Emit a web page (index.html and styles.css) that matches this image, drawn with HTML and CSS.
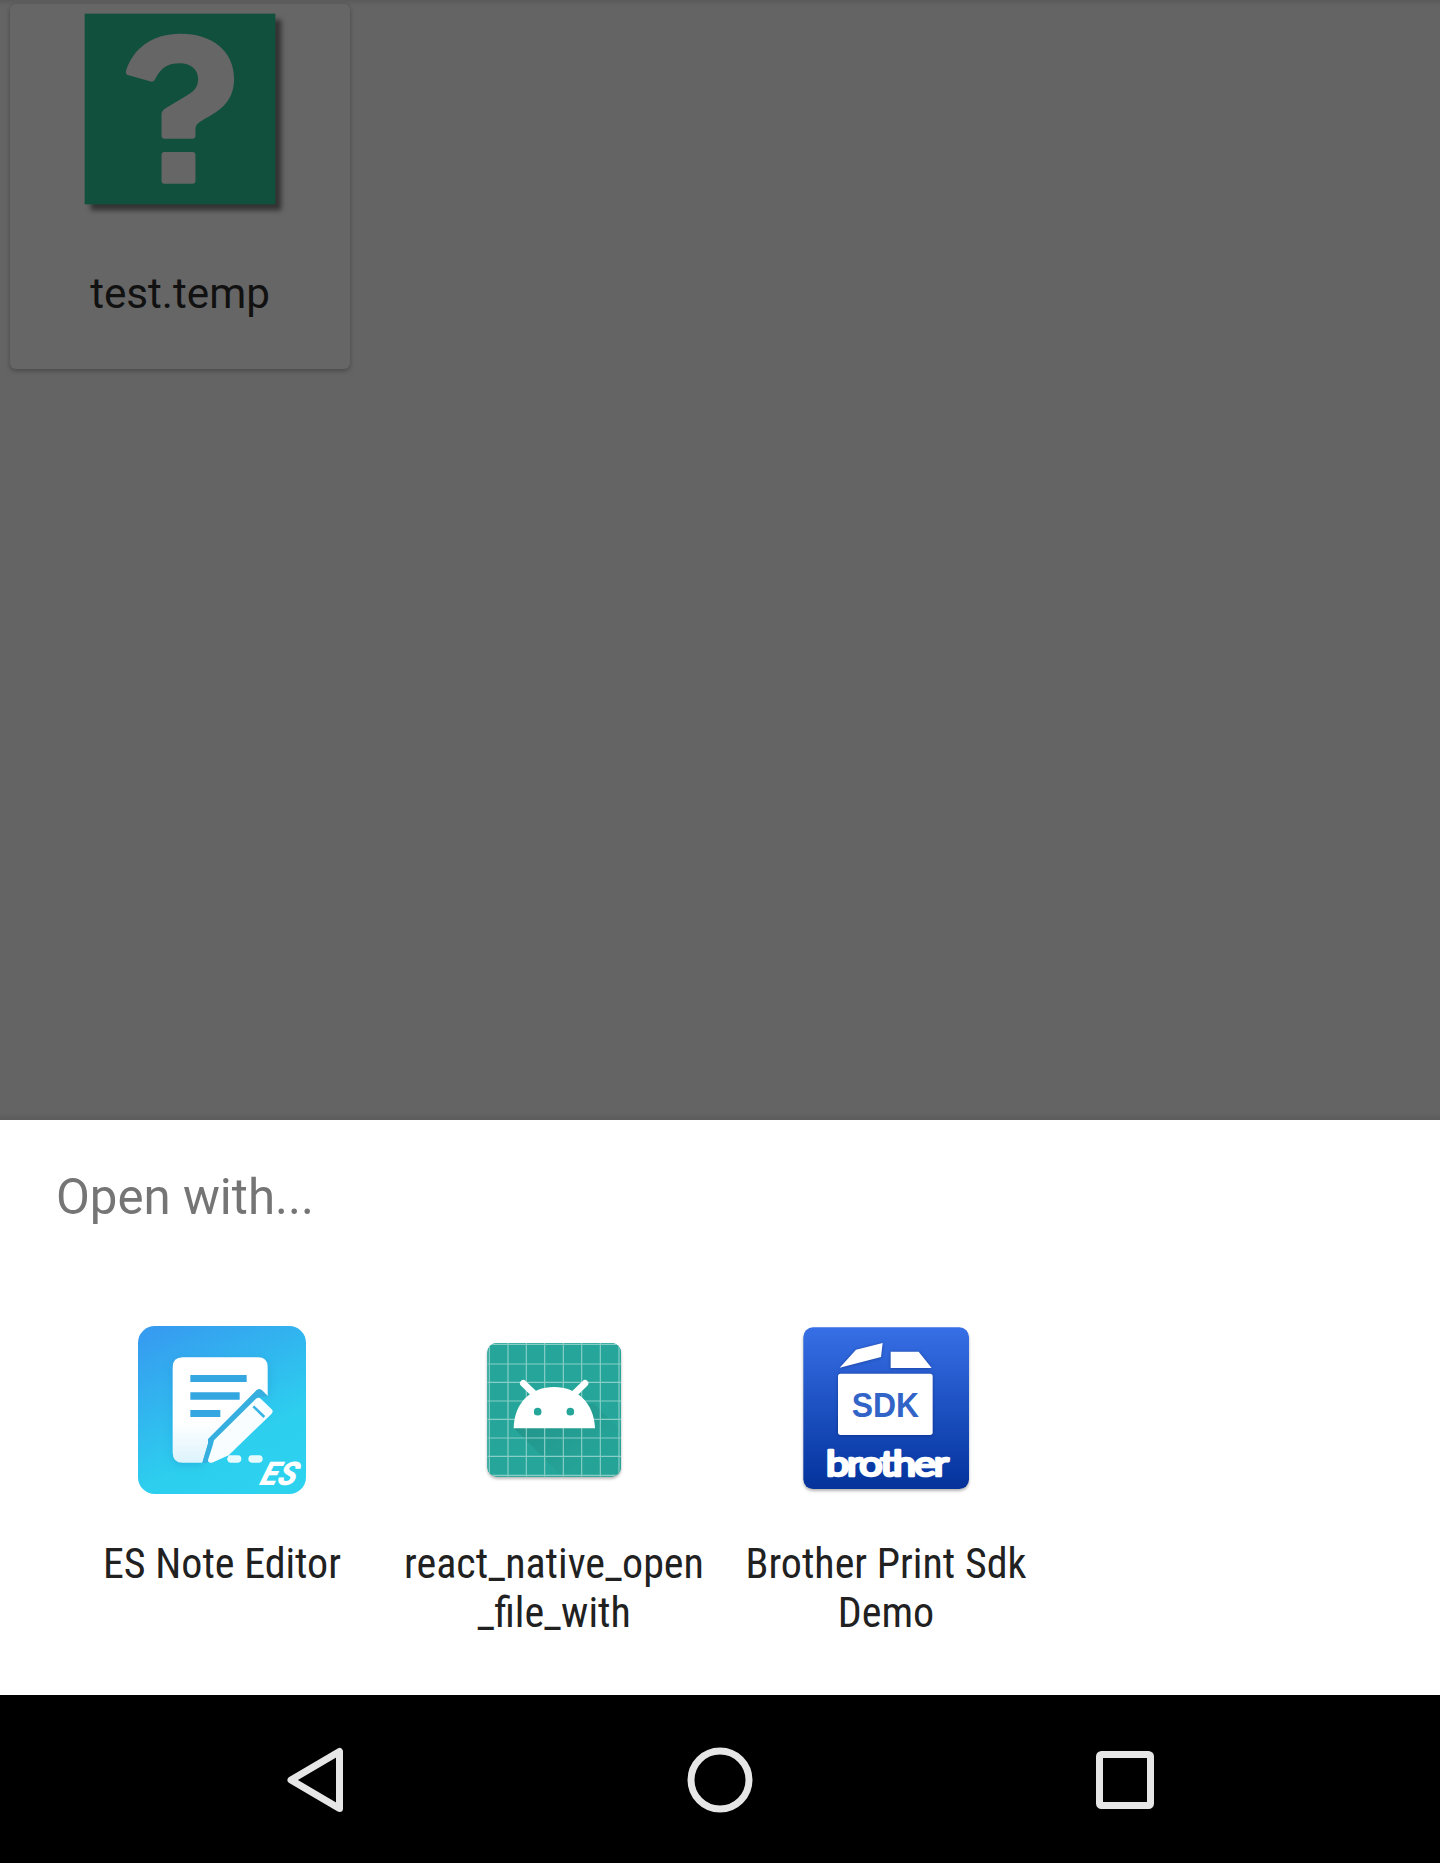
FILE: index.html
```html
<!DOCTYPE html>
<html lang="en">
<head>
<meta charset="utf-8">
<title>Open with</title>
<link rel="stylesheet" href="styles.css">
</head>
<body>
<main class="files">
  <article class="file-card">
    <svg class="file-icon" viewBox="256 42 571 571" aria-hidden="true">
      <rect x="255" y="41" width="573" height="573" fill="#12503e"/>
      <path fill="#666" d="M384 225Q377 222 379 214C400 144 460 101 543 101C640 101 704 155 704 236C704 292 677 325 623 353C600 366 588 372 588 388V407Q588 417 578 417H496Q486 417 486 407V344Q486 333 497 326L557 290C582 275 596 263 596 237C596 208 573 190 541 190C505 190 484 203 467 237Q463 247 454 245Z"/>
      <rect x="486" y="457" width="102" height="95" rx="9" fill="#666"/>
    </svg>
    <div class="file-name">test.temp</div>
  </article>
</main>
<section class="sheet">
  <h1 class="sheet-title">Open with...</h1>
  <div class="apps">
    <div class="app">
      <svg class="app-icon" viewBox="6 0 600 600" aria-hidden="true">
        <defs>
          <linearGradient id="es" x1=".15" y1="0" x2=".65" y2="1"><stop offset="0" stop-color="#369cf0"/><stop offset=".72" stop-color="#2dceee"/><stop offset="1" stop-color="#2dd2ef"/></linearGradient>
          <linearGradient id="paper" x1="0" y1="0" x2="0" y2="1"><stop offset=".62" stop-color="#fff"/><stop offset="1" stop-color="#dcf3fc"/></linearGradient>
        </defs>
        <rect x="54" y="48" width="504" height="504" rx="50" fill="url(#es)"/>
        <path class="paper" fill="url(#paper)" d="M188 142H414Q443 142 443 171V258L428 243Q420 233 410 241L264 388V401L247 458H188Q158 458 158 428V172Q158 142 188 142Z"/>
        <path fill="#34a6e0" d="M211 195H380V216H211ZM211 247H359V269H211ZM211 300H301V321H211Z"/>
        <path fill="#36aee0" d="M443 258L428 243Q420 233 410 241L264 388V401L247 458H264L278 402L282 391L414 262Z"/>
        <path fill="#f8fdff" d="M408 266Q416 260 423 267L455 298Q461 304 455 311L326 436L276 458Q261 460 265 447L278 407L282 391Z"/>
        <path stroke="#38b4e4" stroke-width="8" d="M400 289L433 321"/>
        <path fill="#e6f9fd" d="M326 436H354Q364 437 364 447T354 458H331Q323 457 321 448ZM395 436H418Q428 437 428 447T418 458H395Q385 457 385 447T395 436Z"/>
        <text class="es-logo" transform="translate(416 525) skewX(-18)" textLength="108" lengthAdjust="spacingAndGlyphs">ES</text>
      </svg>
      <div class="app-name">ES Note Editor</div>
    </div>
    <div class="app">
      <svg class="app-icon" viewBox="-48 -30 600 600" aria-hidden="true">
        <defs>
          <clipPath id="tile"><rect x="52" y="69" width="401" height="401" rx="29"/></clipPath>
          <linearGradient id="cast" gradientUnits="userSpaceOnUse" x1="200" y1="270" x2="330" y2="430"><stop offset="0" stop-opacity=".1"/><stop offset="1" stop-opacity=".02"/></linearGradient>
        </defs>
        <rect class="tile-shadow" x="52" y="69" width="401" height="401" rx="29" fill="#26a69a"/>
        <g clip-path="url(#tile)">
          <rect x="52" y="69" width="401" height="401" fill="#26a69a"/>
          <path fill="url(#cast)" d="M131 324L277 470H453V330L370 250Z"/>
          <path stroke="#88cec7" stroke-width="3.500" d="M58 69V470M114 69V470M169 69V470M224 69V470M280 69V470M335 69V470M391 69V470M447 69V470M52 73H453M52 132H453M52 187H453M52 243H453M52 298H453M52 354H453M52 409H453M52 466H453"/>
        </g>
        <path fill="#fff" d="M131 325C132 248 184 201 252 201S372 248 375 325Z"/>
        <path stroke="#fff" stroke-width="20" stroke-linecap="round" d="M160 190L193 222M345 190L312 222"/>
        <circle cx="203" cy="275" r="11.500" fill="#26a69a"/><circle cx="301" cy="275" r="11.500" fill="#26a69a"/>
      </svg>
      <div class="app-name">react_native_open<br>_file_with</div>
    </div>
    <div class="app">
      <svg class="app-icon" viewBox="-12 -15 600 600" aria-hidden="true">
        <defs><linearGradient id="blue" x1="0" y1="0" x2="0" y2="1"><stop offset="0" stop-color="#376fe6"/><stop offset=".9" stop-color="#0838a3"/><stop offset="1" stop-color="#06339a"/></linearGradient></defs>
        <rect class="blue-shadow" x="40" y="37" width="497" height="485" rx="29" fill="url(#blue)"/>
        <g class="box" fill="#fff">
          <path d="M149 158L198 104L278 84L273 126ZM302 110H386L425 159H302Z"/>
          <rect x="144" y="176" width="284" height="184" rx="8"/>
        </g>
        <text class="sdk-text" x="185" y="305" textLength="202" lengthAdjust="spacingAndGlyphs">SDK</text>
        <text class="brother-text" x="108" y="484" textLength="362" lengthAdjust="spacingAndGlyphs">brother</text>
      </svg>
      <div class="app-name">Brother Print Sdk<br>Demo</div>
    </div>
  </div>
</section>
<nav class="navbar">
  <svg class="nav-icon" viewBox="0 0 72 72" aria-label="Back"><path d="M60.500 7.500V64.500L12 36Z"/></svg>
  <svg class="nav-icon" viewBox="0 0 72 72" aria-label="Home"><circle cx="36" cy="36" r="29"/></svg>
  <svg class="nav-icon" viewBox="0 0 72 72" aria-label="Recent apps"><rect x="10.500" y="10.500" width="51" height="51" rx="2"/></svg>
</nav>
</body>
</html>
```
FILE: styles.css
```css
* { box-sizing: border-box; }

body {
  margin: 0;
  width: 1440px;
  height: 1863px;
  display: flex;
  flex-direction: column;
  overflow: hidden;
  font-family: Roboto, "Liberation Sans", sans-serif;
}

.files {
  height: 1120px;
  padding: 4px 10px;
  background: linear-gradient(#5b5b5b, #646464 6px, #646464 1112px, #5c5c5c);
}

.file-card {
  width: 340px;
  height: 365px;
  padding-top: 10px;
  display: flex;
  flex-direction: column;
  align-items: center;
  border-radius: 6px;
  background: #666;
  box-shadow: 0 2px 5px rgba(0, 0, 0, .28);
}

.file-icon {
  width: 190px;
  height: 190px;
  flex: none;
  overflow: visible;
  filter: drop-shadow(6px 6px 2.5px rgba(0, 0, 0, .5));
}

.file-name {
  margin-top: 65px;
  font-size: 42.2px;
  line-height: 50px;
  color: #111;
}

.sheet {
  height: 575px;
  background: #fff;
}

.sheet-title {
  margin: 0;
  padding: 48px 56px 0;
  font-size: 49.2px;
  font-weight: 400;
  line-height: 59px;
  color: #757575;
}

.apps {
  padding: 83px 56px 0;
  display: grid;
  grid-template-columns: repeat(4, 332px);
}

.app {
  display: flex;
  flex-direction: column;
  align-items: center;
}

.app-icon {
  width: 200px;
  height: 200px;
}

.app-name {
  margin-top: 29px;
  font-family: "Roboto Condensed", Roboto, sans-serif;
  font-stretch: 75%;
  font-size: 42px;
  line-height: 49px;
  text-align: center;
  white-space: nowrap;
  color: #212121;
}

.tile-shadow, .blue-shadow { filter: drop-shadow(0 6px 5px rgba(0, 0, 0, .3)); }
.box { filter: drop-shadow(0 1px 5px rgba(0, 0, 40, .35)); }
.paper { filter: drop-shadow(0 8px 12px rgba(20, 110, 180, .25)); }

.es-logo {
  font: italic 900 98px Roboto, sans-serif;
  fill: #fff;
}

.sdk-text {
  font: 700 104px "Liberation Sans", sans-serif;
  fill: #3264c8;
}

.brother-text {
  font: 400 102px Lato, sans-serif;
  letter-spacing: -5px;
  fill: #fff;
  stroke: #fff;
  stroke-width: 8;
  stroke-linejoin: round;
}

.navbar {
  height: 168px;
  padding: 1px 279px 0 279px;
  display: flex;
  align-items: center;
  justify-content: space-between;
  background: #000;
}

.nav-icon {
  width: 72px;
  height: 72px;
  fill: none;
  stroke: #e6e6e6;
  stroke-width: 7;
  stroke-linejoin: round;
}
```
